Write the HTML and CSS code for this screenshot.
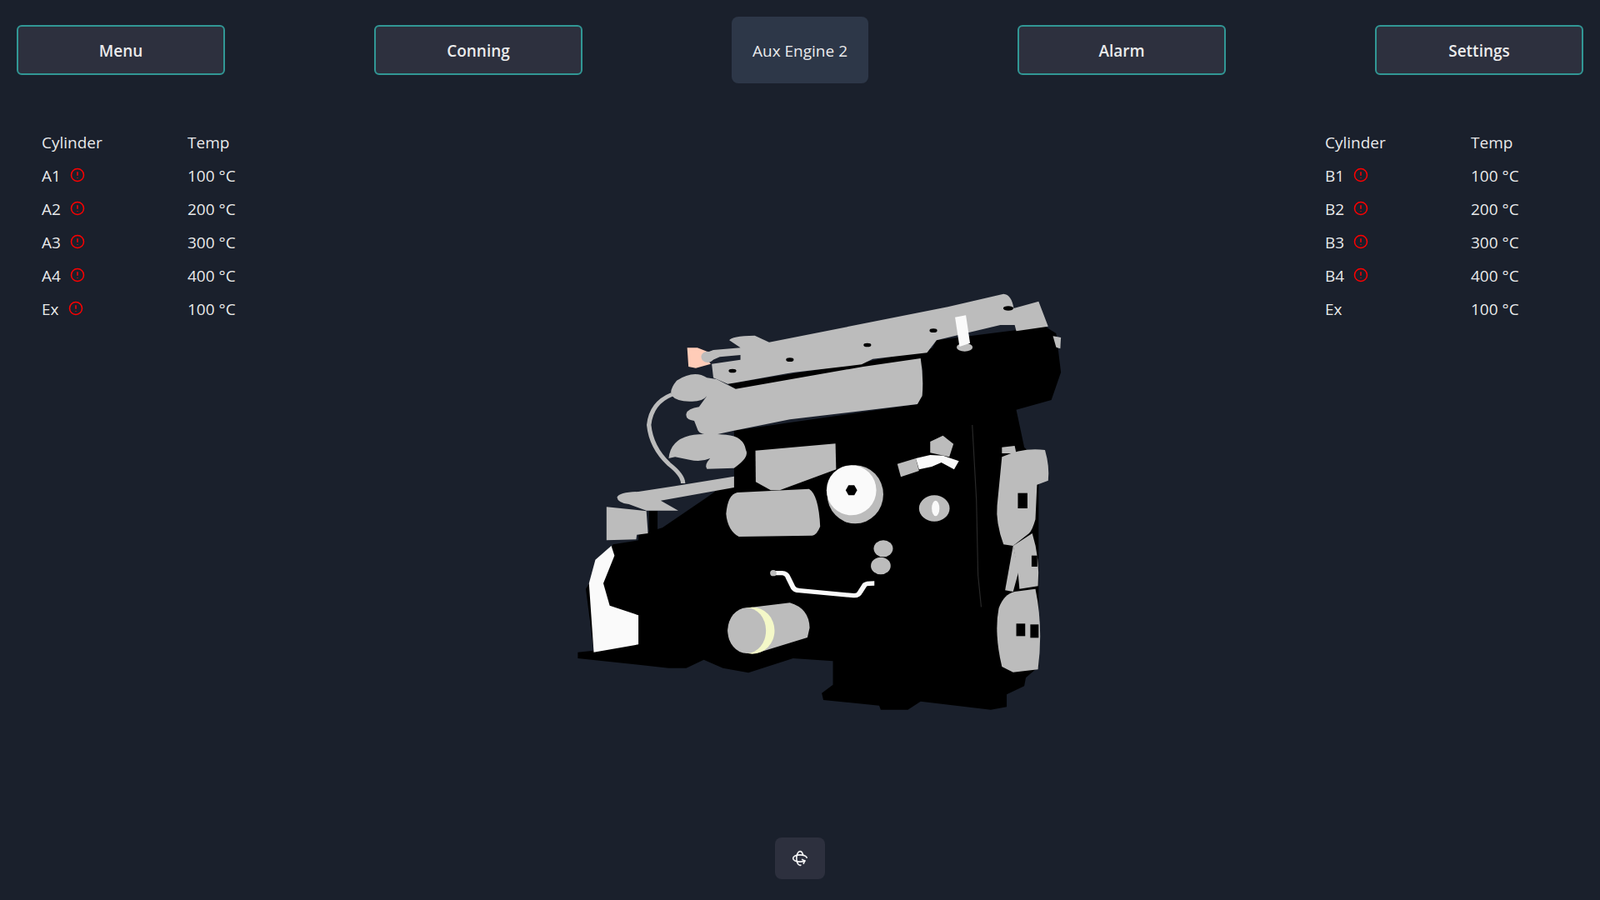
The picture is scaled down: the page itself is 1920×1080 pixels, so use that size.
FILE: index.html
```html
<!DOCTYPE html>
<html lang="en">

<head>
    <meta charset="UTF-8">
    <title>Aux Engine 2</title>
    <link rel="stylesheet" href="styles.css">
</head>

<body>
    <nav class="topbar">
        <button class="nav-btn">Menu</button>
        <button class="nav-btn">Conning</button>
        <div class="page-title">Aux Engine 2</div>
        <button class="nav-btn">Alarm</button>
        <button class="nav-btn">Settings</button>
    </nav>

    <main class="tables">
        <table class="temps">
            <tr><th>Cylinder</th><th>Temp</th></tr>
            <tr><td><span class="cyl">A1 <svg class="alert" viewBox="0 0 24 24"><circle cx="12" cy="12" r="10"/><path d="M12 7v6M12 16v1"/></svg></span></td><td>100 °C</td></tr>
            <tr><td><span class="cyl">A2 <svg class="alert" viewBox="0 0 24 24"><circle cx="12" cy="12" r="10"/><path d="M12 7v6M12 16v1"/></svg></span></td><td>200 °C</td></tr>
            <tr><td><span class="cyl">A3 <svg class="alert" viewBox="0 0 24 24"><circle cx="12" cy="12" r="10"/><path d="M12 7v6M12 16v1"/></svg></span></td><td>300 °C</td></tr>
            <tr><td><span class="cyl">A4 <svg class="alert" viewBox="0 0 24 24"><circle cx="12" cy="12" r="10"/><path d="M12 7v6M12 16v1"/></svg></span></td><td>400 °C</td></tr>
            <tr><td><span class="cyl">Ex <svg class="alert" viewBox="0 0 24 24"><circle cx="12" cy="12" r="10"/><path d="M12 7v6M12 16v1"/></svg></span></td><td>100 °C</td></tr>
        </table>
        <table class="temps">
            <tr><th>Cylinder</th><th>Temp</th></tr>
            <tr><td><span class="cyl">B1 <svg class="alert" viewBox="0 0 24 24"><circle cx="12" cy="12" r="10"/><path d="M12 7v6M12 16v1"/></svg></span></td><td>100 °C</td></tr>
            <tr><td><span class="cyl">B2 <svg class="alert" viewBox="0 0 24 24"><circle cx="12" cy="12" r="10"/><path d="M12 7v6M12 16v1"/></svg></span></td><td>200 °C</td></tr>
            <tr><td><span class="cyl">B3 <svg class="alert" viewBox="0 0 24 24"><circle cx="12" cy="12" r="10"/><path d="M12 7v6M12 16v1"/></svg></span></td><td>300 °C</td></tr>
            <tr><td><span class="cyl">B4 <svg class="alert" viewBox="0 0 24 24"><circle cx="12" cy="12" r="10"/><path d="M12 7v6M12 16v1"/></svg></span></td><td>400 °C</td></tr>
            <tr><td><span class="cyl">Ex</span></td><td>100 °C</td></tr>
        </table>
    </main>

    <!-- the engine model, stretched into its box -->
    <svg class="engine" viewBox="0 0 1568 1590" preserveAspectRatio="none">
        <g class="black">
            <path d="M525 530 L1100 435 L1115 400 L1115 300 L1160 205 L1500 155 L1535 180 L1550 320 L1520 420 L1410 455 L1435 590 L1480 640 L1480 1380 L1440 1420 L1435 1450 L1380 1480 L1380 1525 L1330 1535 L1110 1505 L1070 1535 L985 1535 L980 1520 L805 1500 L800 1475 L835 1445 L835 1360 L710 1350 L570 1402 L490 1385 L430 1355 L375 1385 L320 1385 L35 1350 L35 1328 L85 1322 L60 1100 L145 940 L225 925 L225 905 L300 880 L440 770 L525 700 Z"/>
            <path d="M505 362 L930 285 L1160 230 L1115 300 L530 382 Z"/>
        </g>
        <g class="grey">
            <path d="M510 205 Q515 190 590 188 L635 212 L1195 85 L1370 38 Q1395 40 1402 90 L1480 65 L1510 155 L1410 172 L1405 150 L1360 150 L1160 205 L1130 250 L960 272 L925 292 L715 320 L690 325 L530 358 L505 362 L460 340 L455 290 L545 275 L545 258 L480 265 L430 290 L425 255 L460 240 L545 232 Z"/>
            <path d="M530 380 L930 300 L1110 270 Q1120 340 1115 405 L1100 435 L700 490 L525 530 L465 545 Q420 548 412 530 L400 495 Q372 490 375 470 Q380 450 415 445 L440 405 Q425 428 385 425 Q345 425 330 405 Q320 385 345 350 Q400 310 440 340 L470 345 Z"/>
            <path d="M320 630 Q325 565 385 548 Q430 538 500 545 Q555 550 562 600 Q575 625 525 665 L440 668 Q430 655 450 630 Q420 645 385 635 L340 625 Z"/>
            <path d="M158 770 Q165 752 225 750 L340 730 L525 695 L525 735 L295 782 L350 818 L250 818 L195 795 Q160 790 158 770 Z"/>
            <path d="M125 805 L215 815 L250 820 L255 900 L220 905 L218 922 L125 925 Z"/>
            <path d="M592 602 L843 577 L845 670 L668 745 L640 745 L593 715 Z"/>
            <path d="M500 830 Q505 760 535 753 L760 740 Q790 760 795 875 Q785 905 770 908 L540 912 Q505 890 500 830 Z"/>
            <path d="M1037 650 L1095 630 L1105 675 L1048 697 Z"/>
            <path d="M1180 548 L1213 578 L1200 625 L1140 610 L1140 570 Z"/>
            <path d="M1365 590 L1405 585 L1410 612 L1365 612 Z"/>
            <path d="M1525 190 L1550 195 L1548 235 L1535 230 Z"/>
            <ellipse cx="1248" cy="230" rx="25" ry="15"/>
            <ellipse cx="905" cy="760" rx="88" ry="105"/>
            <ellipse cx="1153" cy="810" rx="48" ry="47"/>
            <circle cx="993" cy="955" r="30"/>
            <circle cx="985" cy="1017" r="31"/>
            <path d="M1365 625 Q1430 590 1500 600 Q1515 660 1510 710 L1475 725 L1470 850 Q1460 890 1450 900 L1400 945 L1370 940 Q1345 860 1350 800 Z"/>
            <path d="M1460 900 Q1485 990 1478 1090 L1420 1100 L1415 1035 L1400 945 Z"/>
            <path d="M1400 945 L1418 1035 L1400 1110 L1375 1105 Z"/>
            <path d="M1355 1170 Q1370 1120 1405 1110 L1470 1100 Q1495 1240 1478 1390 L1400 1400 L1365 1380 Q1340 1260 1355 1170 Z"/>
            <path d="M510 1220 Q530 1170 570 1168 L700 1150 Q760 1170 762 1240 L755 1275 L600 1330 Q520 1340 505 1250 Z"/>
        </g>
        <path class="hose" d="M330 400 Q265 430 258 510 Q265 590 320 650 Q365 690 365 720"/>
        <path class="pink" d="M378 232 L410 232 L440 245 L430 262 L452 290 L405 305 L382 300 Z"/>
        <circle class="grey" cx="442" cy="265" r="20"/>
        <ellipse class="cream" cx="582" cy="1250" rx="70" ry="84"/>
        <ellipse class="grey" cx="565" cy="1250" rx="60" ry="82"/>
        <g class="white">
            <path d="M1218 122 L1252 115 L1265 215 L1232 228 Z"/>
            <path d="M1095 630 L1140 618 L1180 620 L1230 640 L1215 670 L1175 645 L1145 660 L1105 670 Z"/>
            <ellipse cx="893" cy="745" rx="78" ry="90"/>
            <ellipse cx="1157" cy="810" rx="12" ry="28"/>
            <path d="M70 1080 L90 995 L140 945 L150 980 L115 1080 L135 1160 L225 1195 L225 1300 L85 1328 Z"/>
        </g>
        <path class="pipe" d="M650 1043 L675 1043 Q690 1043 695 1060 L710 1095 Q715 1105 730 1106 L900 1124 Q915 1125 920 1112 L935 1085 Q940 1080 965 1080"/>
        <ellipse class="grey" cx="648" cy="1043" rx="10" ry="11"/>
        <g class="black">
            <polygon points="875,745 884,727 902,727 911,745 902,763 884,763"/>
            <ellipse cx="520" cy="315" rx="12" ry="7"/>
            <ellipse cx="700" cy="275" rx="12" ry="7"/>
            <ellipse cx="943" cy="222" rx="12" ry="7"/>
            <ellipse cx="1150" cy="170" rx="12" ry="7"/>
            <ellipse cx="1385" cy="90" rx="16" ry="8"/>
            <rect x="1415" y="755" width="30" height="55"/>
            <rect x="1458" y="980" width="18" height="40"/>
            <rect x="1410" y="1225" width="28" height="45"/>
            <rect x="1454" y="1228" width="26" height="48"/>
            <path d="M258 820 L285 820 L285 900 L258 905 Z"/>
        </g>
        <path class="sliver" d="M1272 510 L1285 780 L1290 1050 L1300 1165"/>
    </svg>

    <button class="rotate-btn">
        <svg viewBox="0 0 24 24"><path d="M16.466 7.5C15.643 4.237 13.952 2 12 2 9.239 2 7 6.477 7 12s2.239 10 5 10c.342 0 .677-.069 1-.2"/><path d="m15.194 13.707 3.814 1.86-1.86 3.814"/><path d="M19 15.57c-1.804.885-4.274 1.43-7 1.43-5.523 0-10-2.239-10-5s4.477-5 10-5c4.838 0 8.873 1.718 9.8 4"/></svg>
    </button>
</body>

</html>
```

FILE: styles.css
```css
html, body {
    height: 100%;
}
body {
    margin: 0;
    background-color: #1a202c;
    color: rgba(255, 255, 255, 0.92);
    font-family: "Open Sans", "Noto Sans", sans-serif;
    font-size: 19px;
    overflow: hidden;
}
.topbar {
    display: flex;
    justify-content: space-between;
    align-items: center;
    padding: 20px 20px 0;
}
.nav-btn {
    width: 250px;
    height: 60px;
    padding: 2px 0 0;
    border: 2px solid #319795;
    border-radius: 6px;
    background-color: #2d303e;
    color: rgba(255, 255, 255, 0.92);
    font-family: inherit;
    font-size: 19px;
    font-weight: 600;
}
.page-title {
    display: flex;
    align-items: center;
    padding: 2px 25px 0;
    height: 80px;
    box-sizing: border-box;
    border-radius: 8px;
    background-color: #2d3748;
}
.tables {
    display: flex;
    justify-content: space-between;
    padding: 51px 50px 0;
}
.temps {
    width: 280px;
    border-collapse: collapse;
    table-layout: fixed;
}
.temps th, .temps td {
    height: 40px;
    padding: 0;
    text-align: left;
    font-weight: 400;
}
.temps th:first-child, .temps td:first-child {
    width: 175px;
}
.cyl {
    display: flex;
    align-items: center;
    gap: 11px;
}
.alert {
    width: 18px;
    height: 18px;
    margin-top: -2px;
    fill: none;
    stroke: #f00;
    stroke-width: 2;
}
.engine {
    position: absolute;
    left: 680px;
    top: 340px;
    width: 600px;
    height: 530px;
}
.black { fill: #000; }
.grey { fill: #bcbcbc; }
.white { fill: #fafafa; }
.pink { fill: #ffccb8; }
.cream { fill: #f4f8c8; }
.hose {
    fill: none;
    stroke: #bcbcbc;
    stroke-width: 14;
}
.pipe {
    fill: none;
    stroke: #fafafa;
    stroke-width: 16;
}
.sliver {
    fill: none;
    stroke: #2a2a2a;
    stroke-width: 3;
}
.rotate-btn {
    position: absolute;
    left: 930px;
    top: 1005px;
    display: flex;
    align-items: center;
    justify-content: center;
    width: 60px;
    height: 50px;
    padding: 0;
    border: none;
    border-radius: 8px;
    background-color: #2d303e;
}
.rotate-btn svg {
    width: 20px;
    height: 20px;
    fill: none;
    stroke: rgba(255, 255, 255, 0.92);
    stroke-width: 2;
    stroke-linecap: round;
    stroke-linejoin: round;
}
```
